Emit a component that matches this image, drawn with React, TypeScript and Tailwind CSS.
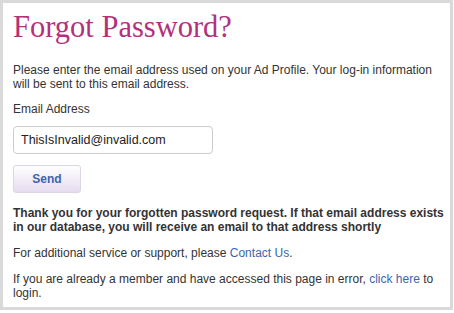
import React from 'react';

export default function App() {
  return (
    <div className="w-[454px] h-[313px] bg-white">
      <div className="w-[453px] h-[310px] border-[3px] border-[#d9d9d9] bg-white pl-[10px] pr-[8px] pt-[7px] font-['Liberation_Sans',Arial,sans-serif] text-[12px] leading-[14px] text-[#333]">
        <h1 className="font-['Liberation_Serif','Times_New_Roman',serif] text-[30.5px] leading-[34px] text-[#b3317c]">
          Forgot Password?
        </h1>
        <p className="mt-[19px]">
          Please enter the email address used on your Ad Profile. Your log-in information will be sent to this email address.
        </p>
        <label className="block mt-[11px]">Email Address</label>
        <input
          type="text"
          defaultValue="ThisIsInvalid@invalid.com"
          className="mt-[10px] block w-[200px] h-[28px] rounded-[4px] border border-[#ccc] px-[7px] text-[12.5px] text-[#222] outline-none"
        />
        <button className="mt-[11px] block w-[68px] h-[28px] rounded-[3px] border border-[#ddd4e6] bg-gradient-to-b from-white to-[#e6dcf0] text-[12px] font-bold text-[#3f63ad]">
          Send
        </button>
        <p className="mt-[13px] mr-[-8px] font-bold">
          Thank you for your forgotten password request. If that email address exists in our database, you will receive an email to that address shortly
        </p>
        <p className="mt-[12px]">
          For additional service or support, please <a className="text-[#3b66b0]">Contact Us</a>.
        </p>
        <p className="mt-[12px]">
          If you are already a member and have accessed this page in error, <a className="text-[#3b66b0]">click here</a> to login.
        </p>
      </div>
    </div>
  );
}
